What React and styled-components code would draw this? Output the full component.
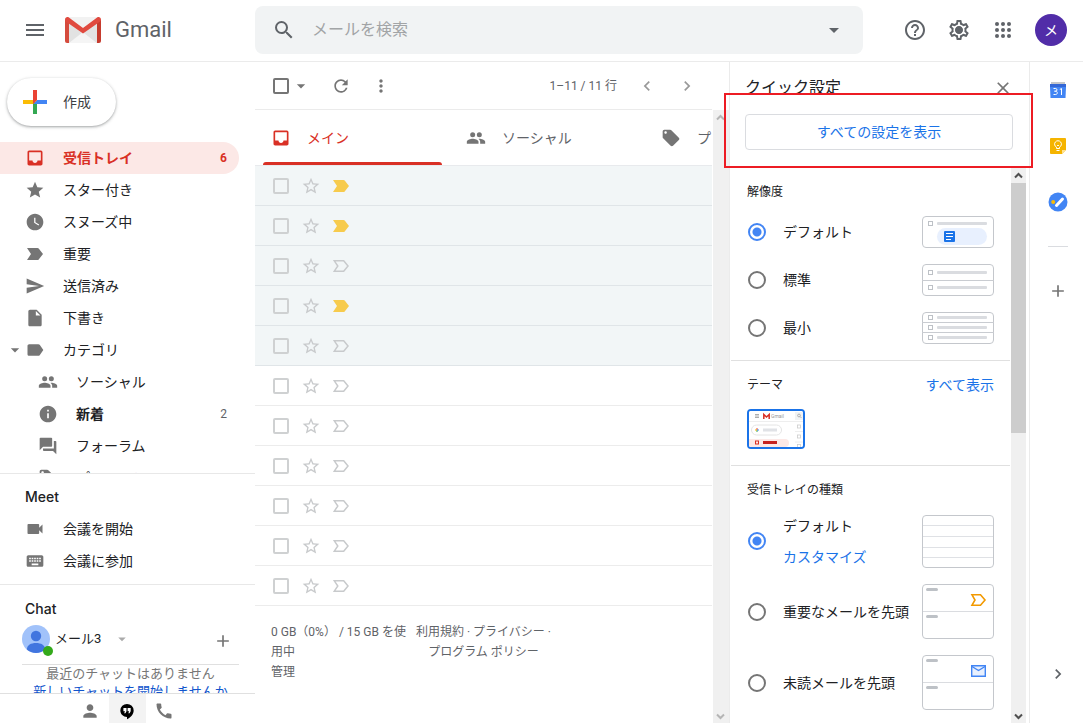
import React, { useState } from 'react';
import styled, { createGlobalStyle } from 'styled-components';
import {
  MdAdd,
  MdArrowDropDown,
  MdCall,
  MdChevronLeft,
  MdChevronRight,
  MdClose,
  MdForum,
  MdHelpOutline,
  MdInbox,
  MdInfo,
  MdInsertDriveFile,
  MdKeyboard,
  MdLabel,
  MdLocalOffer,
  MdMenu,
  MdMoreVert,
  MdOutlineSettings,
  MdPerson,
  MdRefresh,
  MdSearch,
  MdSend,
  MdStar,
  MdStarBorder,
  MdVideocam,
  MdWatchLater,
} from 'react-icons/md';

const folders = [
  { label: '受信トレイ', icon: MdInbox, count: 6, active: true },
  { label: 'スター付き', icon: MdStar },
  { label: 'スヌーズ中', icon: MdWatchLater },
  { label: '重要', icon: ImportantIcon },
  { label: '送信済み', icon: MdSend },
  { label: '下書き', icon: MdInsertDriveFile },
  { label: 'カテゴリ', icon: MdLabel, open: true },
  { label: 'ソーシャル', icon: PeopleIcon, sub: true },
  { label: '新着', icon: MdInfo, sub: true, count: 2, bold: true },
  { label: 'フォーラム', icon: MdForum, sub: true },
  { label: 'プロモーション', icon: MdLocalOffer, sub: true },
];

const tabs = [
  { label: 'メイン', icon: MdInbox },
  { label: 'ソーシャル', icon: PeopleIcon },
  { label: 'プロモーション', icon: MdLocalOffer },
];

const mails = [
  { id: 1, read: true, important: true },
  { id: 2, read: true, important: true },
  { id: 3, read: true },
  { id: 4, read: true, important: true },
  { id: 5, read: true },
  { id: 6 },
  { id: 7 },
  { id: 8 },
  { id: 9 },
  { id: 10 },
  { id: 11 },
];

export default function App() {
  return (
    <Page>
      <GlobalStyle />
      <Header />
      <Body>
        <Sidebar />
        <MailList />
        <QuickSettings />
        <AppRail />
      </Body>
    </Page>
  );
}

function Header() {
  return (
    <TopBar>
      <Brand>
        <IconButton $size={40} $icon={24} aria-label="メインメニュー">
          <MdMenu />
        </IconButton>
        <GmailLogo />
        <BrandName>Gmail</BrandName>
      </Brand>
      <SearchBox role="search">
        <IconButton $size={40} $icon={24} aria-label="検索">
          <MdSearch />
        </IconButton>
        <SearchInput type="text" placeholder="メールを検索" aria-label="メールを検索" />
        <IconButton $size={40} $icon={24} aria-label="検索オプション">
          <MdArrowDropDown />
        </IconButton>
      </SearchBox>
      <HeaderTools>
        <IconButton $size={44} $icon={24} aria-label="サポート">
          <MdHelpOutline />
        </IconButton>
        <IconButton $size={44} $icon={24} aria-label="設定">
          <GearIcon />
        </IconButton>
        <IconButton $size={44} $icon={24} aria-label="Google アプリ">
          <AppsIcon />
        </IconButton>
        <Avatar aria-label="アカウント">メ</Avatar>
      </HeaderTools>
    </TopBar>
  );
}

function Sidebar() {
  return (
    <Side>
      <ComposeArea>
        <Compose>
          <PlusIcon />
          作成
        </Compose>
      </ComposeArea>
      <FolderList>
        {folders.map(({ label, icon: Icon, count, active, open, sub, bold }) => (
          <FolderLink key={label} href="#" $active={active} $sub={sub} $bold={bold}>
            <Twisty>{open && <MdArrowDropDown />}</Twisty>
            <Icon />
            <FolderName>{label}</FolderName>
            {count && <Count>{count}</Count>}
          </FolderLink>
        ))}
      </FolderList>
      <SideSection>
        <SideTitle>Meet</SideTitle>
        <FolderLink href="#">
          <Twisty />
          <MdVideocam />
          <FolderName>会議を開始</FolderName>
        </FolderLink>
        <FolderLink href="#">
          <Twisty />
          <MdKeyboard />
          <FolderName>会議に参加</FolderName>
        </FolderLink>
      </SideSection>
      <ChatSection>
        <SideTitle>Chat</SideTitle>
        <ChatUser>
          <ChatAvatar>
            <PersonBadge />
            <Status />
          </ChatAvatar>
          <ChatName>メール3</ChatName>
          <StatusMenu $size={28} $icon={18} $color="#aaa" aria-label="ステータス">
            <MdArrowDropDown />
          </StatusMenu>
          <NewChat $size={32} $icon={20} $color="#757575" aria-label="新しいチャット">
            <MdAdd />
          </NewChat>
        </ChatUser>
        <ChatEmpty>
          最近のチャットはありません
          <br />
          <a href="#">新しいチャットを開始しませんか</a>
        </ChatEmpty>
      </ChatSection>
      <ChatTabs>
        <ChatTab aria-label="連絡先">
          <MdPerson />
        </ChatTab>
        <ChatTab $active aria-label="会話">
          <HangoutsIcon />
        </ChatTab>
        <ChatTab aria-label="電話">
          <MdCall />
        </ChatTab>
      </ChatTabs>
    </Side>
  );
}

function MailList() {
  const [tab, setTab] = useState('メイン');

  return (
    <Main>
      <Toolbar>
        <CheckBox type="checkbox" aria-label="すべて選択" />
        <IconButton $size={24} $icon={20} $color="#757575" aria-label="選択">
          <MdArrowDropDown />
        </IconButton>
        <ToolGroup>
          <IconButton $size={40} $icon={20} $color="#757575" aria-label="更新">
            <MdRefresh />
          </IconButton>
          <IconButton $size={40} $icon={20} $color="#757575" aria-label="その他">
            <MdMoreVert />
          </IconButton>
        </ToolGroup>
        <Range>1–11 / 11 行</Range>
        <IconButton $size={40} $icon={20} $color="#999" aria-label="前">
          <MdChevronLeft />
        </IconButton>
        <IconButton $size={40} $icon={20} $color="#999" aria-label="次">
          <MdChevronRight />
        </IconButton>
      </Toolbar>
      <Scroller>
        <ListContent>
          <Tabs role="tablist">
            {tabs.map(({ label, icon: Icon }) => (
              <Tab
                key={label}
                role="tab"
                aria-selected={tab === label}
                $active={tab === label}
                onClick={() => setTab(label)}
              >
                <Icon />
                {label}
              </Tab>
            ))}
          </Tabs>
          <Rows>
            {mails.map(({ id, read, important }) => (
              <Row key={id} $read={read}>
                <CheckBox type="checkbox" $light aria-label="選択" />
                <RowButton aria-label="スター">
                  <MdStarBorder />
                </RowButton>
                <RowButton aria-label="重要" $important={important}>
                  <ImportantIcon outline={!important} />
                </RowButton>
              </Row>
            ))}
          </Rows>
          <ListFooter>
            <div>
              0 GB（0%） / 15 GB を使用中
              <br />
              <a href="#">管理</a>
            </div>
            <Policies>
              <a href="#">利用規約</a> · <a href="#">プライバシー</a> ·
              <br />
              <a href="#">プログラム ポリシー</a>
            </Policies>
          </ListFooter>
        </ListContent>
        <ScrollBar dim />
      </Scroller>
    </Main>
  );
}

function ScrollBar({ dim, thumb }) {
  const color = dim ? '#b5b5b5' : '#505050';
  return (
    <Track $width={dim ? 16 : 15} aria-hidden="true">
      <Arrow color={color} d="M4 9.500l3.500-3.500L11 9.500" />
      {thumb && <Thumb />}
      <TrackSpace />
      <Arrow color={color} d="M4 6.500L7.500 10 11 6.500" />
    </Track>
  );
}

function Arrow({ color, d }) {
  return (
    <svg width="15" height="15" viewBox="0 0 15 15" fill="none" stroke={color} strokeWidth="2">
      <path d={d} />
    </svg>
  );
}

function QuickSettings() {
  const [density, setDensity] = useState('default');
  const [inbox, setInbox] = useState('default');

  return (
    <Panel>
      <PanelHead>
        <PanelTitle>クイック設定</PanelTitle>
        <IconButton $size={24} $icon={20} $color="#757575" aria-label="閉じる">
          <MdClose />
        </IconButton>
      </PanelHead>
      <AllSettings>すべての設定を表示</AllSettings>
      <PanelScroll>
        <PanelContent>
          <Section>
            <SectionTitle>解像度</SectionTitle>
            <Option>
              <Radio
                name="density"
                checked={density === 'default'}
                onChange={() => setDensity('default')}
              />
              <OptionText>デフォルト</OptionText>
              <DensityPreview kind="default" />
            </Option>
            <Option>
              <Radio
                name="density"
                checked={density === 'normal'}
                onChange={() => setDensity('normal')}
              />
              <OptionText>標準</OptionText>
              <DensityPreview kind="normal" />
            </Option>
            <Option>
              <Radio
                name="density"
                checked={density === 'compact'}
                onChange={() => setDensity('compact')}
              />
              <OptionText>最小</OptionText>
              <DensityPreview kind="compact" />
            </Option>
          </Section>
          <Section>
            <SectionHead>
              <SectionTitle>テーマ</SectionTitle>
              <BlueLink href="#">すべて表示</BlueLink>
            </SectionHead>
            <ThemeButton aria-label="テーマ">
              <ThemePreview />
            </ThemeButton>
          </Section>
          <Section>
            <SectionTitle>受信トレイの種類</SectionTitle>
            <Option $tall>
              <Radio
                name="inbox"
                checked={inbox === 'default'}
                onChange={() => setInbox('default')}
              />
              <OptionText>
                デフォルト
                <BlueLink href="#">カスタマイズ</BlueLink>
              </OptionText>
              <InboxPreview kind="default" />
            </Option>
            <Option $tall>
              <Radio
                name="inbox"
                checked={inbox === 'important'}
                onChange={() => setInbox('important')}
              />
              <OptionText>重要なメールを先頭</OptionText>
              <InboxPreview kind="important" />
            </Option>
            <Option $tall>
              <Radio
                name="inbox"
                checked={inbox === 'unread'}
                onChange={() => setInbox('unread')}
              />
              <OptionText>未読メールを先頭</OptionText>
              <InboxPreview kind="unread" />
            </Option>
          </Section>
        </PanelContent>
        <ScrollBar thumb />
      </PanelScroll>
      <Highlight />
    </Panel>
  );
}

function AppRail() {
  return (
    <Rail>
      <RailButton aria-label="カレンダー">
        <CalendarIcon />
      </RailButton>
      <RailButton aria-label="Keep">
        <KeepIcon />
      </RailButton>
      <RailButton aria-label="ToDo リスト">
        <TasksIcon />
      </RailButton>
      <RailDivider />
      <RailButton aria-label="アドオンを取得">
        <MdAdd />
      </RailButton>
      <RailToggle aria-label="サイドパネルを非表示">
        <MdChevronRight />
      </RailToggle>
    </Rail>
  );
}

/* icons */

function ImportantIcon({ outline }) {
  return (
    <svg
      width="20"
      height="20"
      viewBox="0 0 20 20"
      fill={outline ? 'none' : 'currentColor'}
      stroke={outline ? 'currentColor' : 'none'}
      strokeWidth="1.5"
    >
      {outline ? (
        <path d="M3.3 4.8h9.4L17 10l-4.3 5.2H3.3L6.8 10z" />
      ) : (
        <path d="M2 4h10.5a1.5 1.5 0 0 1 1.2.6L18 10l-4.300 5.400a1.5 1.5 0 0 1-1.200.6H2l4-6z" />
      )}
    </svg>
  );
}

function PeopleIcon() {
  return (
    <svg width="20" height="20" viewBox="0 0 24 24" fill="currentColor">
      <circle cx="8" cy="8" r="3" />
      <circle cx="16" cy="8" r="3" />
      <path d="M8 13c-2.330 0-7 1.170-7 3.500V19h14v-2.500c0-2.330-4.670-3.500-7-3.500zM16 13c-.29 0-.62.02-.97.05 1.160.84 1.970 1.970 1.970 3.450V19h6v-2.500c0-2.330-4.670-3.500-7-3.500z" />
    </svg>
  );
}

function GearIcon() {
  return (
    <svg viewBox="0 0 24 24" fill="currentColor">
      <MdOutlineSettings />
      <circle cx="12" cy="12" r="3.5" />
    </svg>
  );
}

function GmailLogo() {
  return (
    <svg width="36" height="26" viewBox="0 0 36 26" aria-hidden="true">
      <path fill="#f2f2f2" d="M2 0h32v26H2z" />
      <path fill="#e2e2e2" d="M4 6l14 11L32 6v20H4z" />
      <path fill="#f5f5f5" d="M4 26l14-11 14 11z" />
      <path fill="#e3e3e3" d="M18 15l14-9v20z" />
      <path fill="#d54b3d" d="M0 2.500V24a2 2 0 0 0 2 2h2V5.500z" />
      <path fill="#c63b2e" d="M36 2.500V24a2 2 0 0 1-2 2h-2V5.500z" />
      <path
        fill="#e04a3f"
        d="M0 2.500C0 .5 2.200-.6 3.900.6L18 11 32.100.6C33.800-.6 36 .5 36 2.500c0 1-.4 1.700-1.200 2.300L18 16.500 1.200 4.800C.4 4.200 0 3.500 0 2.500z"
      />
    </svg>
  );
}

function AppsIcon() {
  const at = [6, 12, 18];
  return (
    <svg viewBox="0 0 24 24" fill="currentColor">
      {at.map((y) => at.map((x) => <circle key={`${x}-${y}`} cx={x} cy={y} r="2" />))}
    </svg>
  );
}

function PlusIcon() {
  return (
    <svg width="36" height="36" viewBox="0 0 36 36">
      <path fill="#34a853" d="M16 16v14h4V20z" />
      <path fill="#4285f4" d="M30 16H20l-4 4h14z" />
      <path fill="#fbbc05" d="M6 16v4h10l4-4z" />
      <path fill="#ea4335" d="M20 16V6h-4v14z" />
    </svg>
  );
}

function PersonBadge() {
  return (
    <svg width="28" height="28" viewBox="0 0 28 28">
      <circle cx="14" cy="14" r="14" fill="#a1c2fa" />
      <circle cx="14" cy="11" r="5.200" fill="#4175df" />
      <path fill="#4175df" d="M4.800 24.500C5 20 9 18 14 18s9 2 9.200 6.500A14 14 0 0 1 14 28a14 14 0 0 1-9.200-3.500z" />
    </svg>
  );
}

function HangoutsIcon() {
  return (
    <svg viewBox="0 0 24 24">
      <path
        fill="#000"
        d="M12 3.500a8 8 0 0 0-8 8c0 4.400 3.500 7.700 8 7.700V22c5-2.500 8-6.300 8-10.500a8 8 0 0 0-8-8z"
      />
      <path fill="#fff" d="M7.700 8.500h3.700v3.700L10.100 14.700H8.600l1-2.500H7.700zM12.700 8.500h3.700v3.700L15.100 14.700h-1.500l1-2.500h-1.900z" />
    </svg>
  );
}

function CalendarIcon() {
  return (
    <svg width="16" height="16" viewBox="0 0 16 16">
      <path fill="#c5c7ca" d="M1 0h14v3H1z" />
      <path fill="#3367d6" d="M0 2h16v4H0z" />
      <path fill="#4285f4" d="M0 5h16l-.5 11H.5z" />
      <path
        fill="none"
        stroke="#fff"
        d="M3.500 6.500h2.200c1.700 0 1.700 2.700 0 2.700H4.500h1.200c2.100 0 2.100 3.300 0 3.300H3.500M9.800 7.500l1.700-1v6.500"
      />
    </svg>
  );
}

function KeepIcon() {
  return (
    <svg width="16" height="16" viewBox="0 0 16 16">
      <path fill="#f5b400" d="M1 0h14a1 1 0 0 1 1 1v11l-4 4H1a1 1 0 0 1-1-1V1a1 1 0 0 1 1-1z" />
      <path fill="#fde293" d="M12 16v-4h4z" />
      <path
        fill="none"
        stroke="#fff"
        d="M6.500 10.500V9.200a3.400 3.400 0 1 1 3 0v1.300zM6.500 12.500h3M7.200 7L8 8l.8-1"
      />
    </svg>
  );
}

function TasksIcon() {
  return (
    <svg width="20" height="20" viewBox="0 0 20 20">
      <circle cx="10" cy="10" r="9.500" fill="#4285f4" />
      <path stroke="#fff" strokeWidth="3" strokeLinecap="round" d="M8.500 13.500l6-6.500" />
      <circle cx="5.200" cy="10" r="2" fill="#fbbc04" />
    </svg>
  );
}

function DensityPreview({ kind }) {
  const lines = { default: [7], normal: [8, 23], compact: [5, 15, 25] }[kind];
  const rules = { default: [], normal: [16], compact: [10, 20] }[kind];
  return (
    <Preview width="72" height="32" viewBox="0 0 72 32">
      <rect x="0.500" y="0.500" width="71" height="31" rx="3.500" fill="#fff" stroke="#c4c7cc" />
      {rules.map((y) => (
        <path key={y} stroke="#c9ccd1" d={`M0 ${y + 0.5}h72`} />
      ))}
      {lines.map((y) => (
        <g key={y}>
          <rect x="6.500" y={y - 1.5} width="4" height="4" fill="none" stroke="#bdc1c6" />
          <rect x="15" y={y - 1} width="50" height="3" rx="1" fill="#dadce0" />
        </g>
      ))}
      {kind === 'default' && (
        <g>
          <rect x="15" y="12" width="50" height="17" rx="8.500" fill="#e8f0fe" />
          <rect x="22" y="15" width="11" height="11" rx="1" fill="#1a73e8" />
          <path stroke="#fff" d="M24 17.500h7M24 20.500h7M24 23.500h5" />
        </g>
      )}
    </Preview>
  );
}

function InboxPreview({ kind }) {
  const height = kind === 'default' ? 53 : 55;
  return (
    <Preview width="72" height={height} viewBox={`0 0 72 ${height}`}>
      <rect x="0.500" y="0.500" width="71" height={height - 1} rx="3.500" fill="#fff" stroke="#c4c7cc" />
      {kind === 'default' ? (
        <path stroke="#dfe1e5" d="M1 10.500h70M1 21.500h70M1 32.500h70M1 42.500h70" />
      ) : (
        <g>
          <path stroke="#dadce0" d="M1 27.500h70" />
          <rect x="4" y="4" width="12" height="3" rx="1.500" fill="#bdc1c6" />
          <rect x="4" y="31" width="12" height="3" rx="1.500" fill="#bdc1c6" />
        </g>
      )}
      {kind === 'important' && (
        <path
          fill="none"
          stroke="#f29900"
          strokeWidth="1.600"
          d="M50 10.800h8.500L63 16l-4.500 5.200H50l3-5.200z"
        />
      )}
      {kind === 'unread' && (
        <g fill="#e8f0fe" stroke="#4285f4" strokeWidth="1.400">
          <path d="M49.700 10.700h13.600v10.600H49.700z" />
          <path fill="none" d="M50 11.500l6.500 4 6.500-4" />
        </g>
      )}
    </Preview>
  );
}

function ThemePreview() {
  return (
    <svg width="54" height="36" viewBox="0 0 54 36">
      <path fill="#fff" d="M0 0h54v36H0z" />
      <path stroke="#999" strokeWidth="0.800" d="M6 3.500h4M6 5h4M6 6.500h4" />
      <path fill="none" stroke="#d93025" strokeWidth="1.500" d="M14.800 8V3.500L17.500 6l2.700-2.500V8" />
      <text x="22" y="7" fontSize="5" fontFamily="Roboto, sans-serif" fill="#999">
        Gmail
      </text>
      <path fill="#f1f3f4" d="M46 1h8v8h-8z" />
      <circle cx="50" cy="4.500" r="1.400" fill="none" stroke="#999" strokeWidth="0.700" />
      <path stroke="#999" strokeWidth="0.700" d="M51 5.500l1.500 1.500" />
      <path stroke="#eee" d="M0 10.500h54M46 20.500h8M46 31h8" />
      <rect x="2.500" y="14" width="30" height="10" rx="5" fill="#fff" stroke="#e4e4e4" />
      <path stroke="#ea4335" d="M8 17v2" />
      <path stroke="#34a853" d="M8 19v2" />
      <path stroke="#fbbc05" d="M6 19h2" />
      <path stroke="#4285f4" d="M8 19h2" />
      <path stroke="#e0e2e6" strokeWidth="3" d="M14 19h14" />
      <path fill="#fce8e6" d="M0 28h36a4 4 0 0 1 4 4 4 4 0 0 1-4 4H0z" />
      <rect x="6.500" y="30" width="3" height="3" fill="none" stroke="#d93025" />
      <path stroke="#c5221f" strokeWidth="3" d="M14 31.500h14" />
      <g fill="none" stroke="#ccc" strokeWidth="0.800">
        <rect x="48.500" y="14" width="3" height="3" />
        <rect x="48.500" y="24" width="3" height="3" />
        <rect x="48.500" y="33.500" width="3" height="3" />
      </g>
    </svg>
  );
}

/* styles */

const GlobalStyle = createGlobalStyle`
  * {
    box-sizing: border-box;
  }
  body {
    margin: 0;
    background: #fff;
    color: #202124;
    font-family: Roboto, 'Noto Sans CJK JP', sans-serif;
    font-size: 14px;
    line-height: 20px;
  }
  button,
  input {
    font: inherit;
    margin: 0;
  }
  button {
    padding: 0;
    border: none;
    background: none;
    cursor: pointer;
  }
  a {
    color: inherit;
    text-decoration: none;
  }
  svg {
    display: block;
    flex-shrink: 0;
  }
`;

const Page = styled.div`
  display: flex;
  flex-direction: column;
  height: 100vh;
  overflow: hidden;
`;

const Body = styled.div`
  display: flex;
  flex: 1;
  min-height: 0;
`;

const IconButton = styled.button`
  display: flex;
  align-items: center;
  justify-content: center;
  flex-shrink: 0;
  width: ${({ $size }) => $size}px;
  height: ${({ $size }) => $size}px;
  color: ${({ $color }) => $color || '#5f6368'};
  svg {
    width: ${({ $icon }) => $icon}px;
    height: ${({ $icon }) => $icon}px;
  }
`;

const TopBar = styled.header`
  display: flex;
  align-items: center;
  flex-shrink: 0;
  height: 62px;
  padding-right: 16px;
  padding-bottom: 1px;
  border-bottom: 1px solid #ebebeb;
`;

const Brand = styled.div`
  display: flex;
  align-items: center;
  flex-shrink: 0;
  width: 255px;
  padding-left: 15px;
  & > svg {
    margin: 0 14px 0 10px;
  }
`;

const BrandName = styled.span`
  font-size: 22px;
  color: #5f6368;
`;

const SearchBox = styled.div`
  display: flex;
  align-items: center;
  flex: 1;
  height: 48px;
  padding: 0 9px;
  border-radius: 8px;
  background-color: #f1f3f4;
`;

const SearchInput = styled.input`
  flex: 1;
  min-width: 0;
  padding: 0 8px;
  border: none;
  outline: none;
  background: none;
  font-size: 16px;
  &::placeholder {
    color: #a2a4a6;
  }
`;

const HeaderTools = styled.div`
  display: flex;
  align-items: center;
  margin-left: 30px;
`;

const Avatar = styled.button`
  width: 32px;
  height: 32px;
  margin-left: 10px;
  border-radius: 50%;
  background-color: #512da8;
  color: #fff;
`;

const Side = styled.nav`
  display: flex;
  flex-direction: column;
  flex-shrink: 0;
  width: 255px;
`;

const ComposeArea = styled.div`
  padding: 16px 7px;
`;

const Compose = styled.button`
  display: flex;
  align-items: center;
  gap: 10px;
  height: 48px;
  padding: 0 25px 0 10px;
  border-radius: 24px;
  color: #3c4043;
  box-shadow: 0 1px 2px 0 rgba(60, 64, 67, 0.3), 0 1px 3px 1px rgba(60, 64, 67, 0.15);
`;

const FolderList = styled.div`
  flex: 1;
  min-height: 0;
  overflow: hidden;
`;

const FolderLink = styled.a`
  display: flex;
  align-items: center;
  height: 32px;
  margin-right: 16px;
  padding: 0 12px 0 ${({ $sub }) => ($sub ? 18 : 5)}px;
  border-radius: 0 16px 16px 0;
  background-color: ${({ $active }) => ($active ? '#fce8e6' : 'transparent')};
  color: ${({ $active }) => ($active ? '#d93025' : '#202124')};
  font-weight: ${({ $active, $bold }) => ($active || $bold ? 700 : 400)};
  svg {
    width: 20px;
    height: 20px;
    color: ${({ $active }) => ($active ? '#d93025' : '#757575')};
  }
`;

const Twisty = styled.span`
  width: 20px;
  height: 20px;
`;

const FolderName = styled.span`
  flex: 1;
  margin-left: 18px;
`;

const Count = styled.span`
  font-size: 12px;
  ${FolderLink}:not(:first-child) & {
    color: #5f6368;
    font-weight: 400;
  }
`;

const SideSection = styled.section`
  padding: 7px 0;
  border-top: 1px solid #e8e8e8;
`;

const SideTitle = styled.h2`
  margin: 0 0 0 25px;
  font-family: Inter, Roboto, sans-serif;
  font-size: 14px;
  font-weight: 500;
  line-height: 32px;
`;

const ChatSection = styled(SideSection)`
  padding: 8px 16px 0 0;
`;

const ChatUser = styled.div`
  display: flex;
  align-items: flex-start;
  height: 40px;
  margin-left: 22px;
  border-bottom: 1px solid #e0e0e0;
`;

const ChatAvatar = styled.span`
  position: relative;
`;

const Status = styled.span`
  position: absolute;
  right: -3px;
  bottom: -3px;
  width: 10px;
  height: 10px;
  border-radius: 50%;
  background-color: #34a91b;
`;

const ChatName = styled.span`
  margin: 0 6px 0 5px;
  font-size: 13px;
  line-height: 28px;
`;

const StatusMenu = styled(IconButton)`
  padding-left: 2px;
`;

const NewChat = styled(IconButton)`
  margin-left: auto;
`;

const ChatEmpty = styled.p`
  height: 28px;
  margin: 0 0 0 22px;
  overflow: hidden;
  font-size: 13px;
  line-height: 18px;
  text-align: center;
  white-space: nowrap;
  color: #777;
  a {
    color: #15c;
  }
`;

const ChatTabs = styled.div`
  display: flex;
  justify-content: center;
  height: 30px;
  padding-right: 1px;
  border-top: 1px solid #e0e0e0;
`;

const ChatTab = styled.button`
  display: flex;
  align-items: center;
  justify-content: center;
  width: 37px;
  padding-top: 4px;
  background-color: ${({ $active }) => ($active ? '#f3f3f3' : 'transparent')};
  color: #757575;
  svg {
    width: 20px;
    height: 20px;
  }
`;

const Main = styled.main`
  display: flex;
  flex-direction: column;
  flex: 1;
  min-width: 0;
`;

const Toolbar = styled.div`
  display: flex;
  align-items: center;
  height: 48px;
  margin-right: 17px;
  padding: 0 5px 0 18px;
  border-bottom: 1px solid #ebebeb;
`;

const CheckBox = styled.input`
  appearance: none;
  width: 16px;
  height: 16px;
  border: 2px solid ${({ $light }) => ($light ? '#cfd1d2' : '#757575')};
  border-radius: 2px;
  &:checked {
    background-color: #757575;
  }
`;

const ToolGroup = styled.div`
  display: flex;
  flex: 1;
  margin-left: 8px;
`;

const Range = styled.span`
  margin-right: 10px;
  font-size: 12px;
  color: #5f6368;
`;

const Scroller = styled.div`
  display: flex;
  flex: 1;
  gap: 1px;
  min-height: 0;
`;

const ListContent = styled.div`
  flex: 1;
  min-width: 0;
  overflow: hidden;
`;

const Tabs = styled.div`
  display: flex;
  height: 56px;
  overflow: hidden;
  border-bottom: 1px solid #e8eaed;
`;

const Tab = styled.button`
  position: relative;
  display: flex;
  align-items: center;
  gap: 16px;
  flex-shrink: 0;
  width: 195px;
  padding-left: 16px;
  white-space: nowrap;
  color: ${({ $active }) => ($active ? '#d93025' : '#5f6368')};
  svg {
    width: 20px;
    height: 20px;
    color: ${({ $active }) => ($active ? '#d93025' : '#757575')};
  }
  &::after {
    content: '';
    position: absolute;
    left: 8px;
    right: 8px;
    bottom: 0;
    height: 3px;
    border-radius: 3px 3px 0 0;
    background-color: ${({ $active }) => ($active ? '#d93025' : 'transparent')};
  }
`;

const Rows = styled.ul`
  margin: 0;
  padding: 0;
  list-style: none;
`;

const Row = styled.li`
  display: flex;
  align-items: center;
  height: 40px;
  padding-left: 18px;
  border-bottom: 1px solid ${({ $read }) => ($read ? '#e0e5e8' : '#ececec')};
  background-color: ${({ $read }) => ($read ? '#f2f6f7' : '#fff')};
`;

const RowButton = styled.button`
  margin-left: 10px;
  color: ${({ $important }) => ($important ? '#f7cb4d' : '#c8cacc')};
  svg {
    width: 20px;
    height: 20px;
  }
  ${CheckBox} + & {
    margin-left: 12px;
  }
`;

const ListFooter = styled.footer`
  display: grid;
  grid-template-columns: repeat(3, 1fr);
  padding: 16px;
  font-size: 12px;
  line-height: 20px;
  color: #5f6368;
`;

const Policies = styled.div`
  text-align: center;
  white-space: nowrap;
`;

const Track = styled.div`
  display: flex;
  flex-direction: column;
  flex-shrink: 0;
  width: ${({ $width }) => $width}px;
  background-color: #f0f0f0;
`;

const Thumb = styled.div`
  height: 45%;
  background-color: #cdcdcd;
`;

const TrackSpace = styled.div`
  flex: 1;
`;

const Panel = styled.aside`
  position: relative;
  display: flex;
  flex-direction: column;
  flex-shrink: 0;
  width: 301px;
  border: solid #ebebeb;
  border-width: 0 1px;
`;

const PanelHead = styled.div`
  display: flex;
  align-items: center;
  justify-content: space-between;
  height: 52px;
  padding: 0 14px 0 15px;
`;

const PanelTitle = styled.h2`
  margin: 0;
  font-size: 16px;
  font-weight: 400;
`;

const AllSettings = styled.button`
  height: 36px;
  margin: 0 16px 18px 15px;
  border: 1px solid #dadce0;
  border-radius: 4px;
  color: #1a73e8;
`;

const PanelScroll = styled.div`
  display: flex;
  flex: 1;
  min-height: 0;
  margin-right: 3px;
`;

const PanelContent = styled.div`
  flex: 1;
  min-width: 0;
  padding: 0 1px;
  overflow: hidden;
`;

const Section = styled.section`
  padding: 16px;
  border-bottom: 1px solid #e0e0e0;
`;

const SectionHead = styled.div`
  display: flex;
  justify-content: space-between;
  line-height: 16px;
`;

const SectionTitle = styled.h3`
  margin: 0 0 16px;
  font-size: 12px;
  font-weight: 400;
  line-height: 16px;
`;

const BlueLink = styled.a`
  color: #1a73e8;
`;

const Option = styled.label`
  display: flex;
  align-items: center;
  min-height: ${({ $tall }) => ($tall ? 54 : 32)}px;
  white-space: nowrap;
  & + & {
    margin-top: 16px;
  }
`;

const Radio = styled.input.attrs({ type: 'radio' })`
  appearance: none;
  flex-shrink: 0;
  width: 18px;
  height: 18px;
  margin-left: 1px;
  border: 2px solid #757575;
  border-radius: 50%;
  &:checked {
    border-color: #4285f4;
    background: radial-gradient(#4285f4 4px, #fff 5px);
  }
`;

const OptionText = styled.span`
  display: flex;
  flex-direction: column;
  gap: 11px;
  margin-left: 17px;
`;

const Preview = styled.svg`
  margin-left: auto;
`;

const ThemeButton = styled.button`
  display: block;
  overflow: hidden;
  border: 2px solid #1a73e8;
  border-radius: 4px;
`;

const Highlight = styled.div`
  position: absolute;
  top: 31px;
  left: -6px;
  right: -4px;
  height: 75px;
  border: 2px solid #ed1c24;
  pointer-events: none;
`;

const Rail = styled.aside`
  display: flex;
  flex-direction: column;
  align-items: center;
  flex-shrink: 0;
  width: 53px;
  padding-left: 3px;
`;

const RailButton = styled.button`
  display: flex;
  align-items: center;
  justify-content: center;
  width: 48px;
  height: 56px;
  font-size: 20px;
  color: #757575;
`;

const RailToggle = styled(RailButton)`
  margin-top: auto;
  margin-bottom: 21px;
  color: #5f6368;
`;

const RailDivider = styled.div`
  width: 20px;
  height: 1px;
  margin: 16px 0;
  background-color: #dadce0;
`;
